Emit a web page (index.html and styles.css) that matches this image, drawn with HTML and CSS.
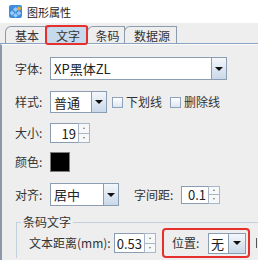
FILE: index.html
```html
<!DOCTYPE html>
<html>
<head>
    <meta charset="utf-8">
    <title>图形属性</title>
    <link rel="stylesheet" href="styles.css">
</head>
<body>
    <div class="titlebar">
        <svg class="appicon" width="13" height="13" viewBox="0 0 13 13">
            <rect x="0" y="0" width="13" height="13" rx="2" fill="#3b8de0"/>
            <path d="M6.5 2 L9 4.5 L6.5 7 L4 4.5 Z M3 5.5 L5.5 8 L3 10.5 L0.8 8.2 Z M6.5 8 L9 10.5 L6.5 12.5 L4 10.5 Z M10 6 L12.2 8.2 L10 10.5 L7.5 8 Z" fill="#9ccbf6"/>
            <circle cx="10" cy="3.5" r="2" fill="#f2a23a"/>
            <circle cx="10.6" cy="3" r="0.9" fill="#8fd14f"/>
        </svg>
        <span class="title">图形属性</span>
    </div>

    <div class="tabs">
        <div class="tab t-basic">基本</div>
        <div class="tab t-text active">文字</div>
        <div class="tab t-code">条码</div>
        <div class="tab t-data">数据源</div>
    </div>

    <div class="panel">
        <div class="row r-font">
            <span class="label">字体:</span>
            <div class="combo">
                <span class="field f-font">XP黑体ZL</span>
                <span class="drop"><i class="tri"></i></span>
            </div>
        </div>

        <div class="row r-style">
            <span class="label">样式:</span>
            <div class="combo">
                <span class="field f-style">普通</span>
                <span class="drop"><i class="tri"></i></span>
            </div>
            <span class="check c-under"></span><span class="ctext">下划线</span>
            <span class="check c-strike"></span><span class="ctext">删除线</span>
        </div>

        <div class="row r-size">
            <span class="label">大小:</span>
            <div class="spinner">
                <span class="field f-size">19</span>
                <span class="steps"><b class="up"></b><b class="down"></b></span>
            </div>
        </div>

        <div class="row r-color">
            <span class="label">颜色:</span>
            <span class="swatch"></span>
        </div>

        <div class="row r-align">
            <span class="label">对齐:</span>
            <div class="combo">
                <span class="field f-align">居中</span>
                <span class="drop"><i class="tri"></i></span>
            </div>
            <span class="label l-spacing">字间距:</span>
            <div class="spinner sp-small">
                <span class="field f-spacing">0.1</span>
                <span class="steps"><b class="up"></b><b class="down"></b></span>
            </div>
        </div>

        <fieldset class="group">
            <legend>条码文字</legend>
            <div class="row r-dist">
                <span class="label l-dist">文本距离(mm):</span>
                <div class="spinner">
                    <span class="field f-dist">0.53</span>
                    <span class="steps"><b class="up"></b><b class="down"></b></span>
                </div>
                <div class="mark">
                    <span class="label l-pos">位置:</span>
                    <div class="combo">
                        <span class="field f-pos">无</span>
                        <span class="drop d-pos"><i class="tri"></i></span>
                    </div>
                </div>
                <span class="cut"></span>
            </div>
        </fieldset>
    </div>
</body>
</html>
```

FILE: styles.css
```css
html, body {
    margin: 0;
    padding: 0;
}
body {
    width: 258px;
    height: 260px;
    overflow: hidden;
    background: #eeeeee;
    font: 12px "Noto Sans CJK SC", "Liberation Sans", sans-serif;
    color: #333333;
}

/* window title */
.titlebar {
    height: 23px;
    background: #ffffff;
    display: flex;
    align-items: center;
}
.appicon {
    margin-left: 9px;
    margin-top: -1px;
}
.title {
    margin-left: 5px;
    font-size: 11px;
    color: #1a1a1a;
    line-height: 12px;
}

/* tab strip */
.tabs {
    height: 20px;
    display: flex;
    align-items: flex-end;
    padding-left: 5px;
    border-bottom: 1px solid #8aa3c2;
}
.tab {
    box-sizing: border-box;
    height: 18px;
    margin-bottom: -1px;
    border: 1px solid #8d9cac;
    border-bottom: none;
    border-top-left-radius: 6px;
    margin-right: -1px;
    text-align: center;
    line-height: 17px;
    padding-left: 3px;
    color: #333;
    background: #eeeeee;
    border-bottom: 1px solid #8aa3c2;
}
.t-basic { width: 41px; }
.t-text { width: 43px; }
.t-code { width: 38px; }
.t-data { width: 53px; }
.tab.active {
    position: relative;
    background: #c6daee;
    border-bottom-color: #c6daee;
}
.tab.active::after {
    content: "";
    position: absolute;
    left: -1px;
    top: -2px;
    right: -1px;
    bottom: -2px;
    border: 2px solid #e5302d;
    border-radius: 3px;
}

/* content */
.panel {
    border-left: 2px solid #8c98a5;
    padding-left: 13px;
    height: 216px;
    border-top: 1px solid #fbfbfb;
}
.row {
    display: flex;
    align-items: center;
}
.label {
    width: 35px;
    flex: none;
    line-height: 14px;
    white-space: nowrap;
}
.r-font { margin-top: 12px; height: 23px; }
.r-style { margin-top: 11px; height: 22px; }
.r-size { margin-top: 10px; height: 20px; }
.r-color { margin-top: 9px; height: 20px; }
.r-align { margin-top: 11px; height: 23px; }

/* combo boxes */
.combo {
    display: flex;
    height: 100%;
}
.field {
    box-sizing: border-box;
    height: 100%;
    background: #ffffff;
    border: 1px solid #8b9db3;
    display: flex;
    align-items: center;
    padding-left: 3px;
    color: #222;
    white-space: nowrap;
}
.f-font { width: 162px; font-size: 13px; }
.f-style { width: 42px; font-size: 13px; }
.f-align { width: 54px; font-size: 13px; }
.f-pos { width: 21px; font-size: 13px; padding-left: 2px; }
.drop {
    box-sizing: border-box;
    width: 16px;
    height: 100%;
    margin-left: -1px;
    border: 1px solid #8b9db3;
    background: linear-gradient(#f4f7fb, #c9d8e8);
    display: flex;
    align-items: center;
    justify-content: center;
}
.d-pos { width: 18px; }
.tri {
    width: 0;
    height: 0;
    border-left: 4px solid transparent;
    border-right: 4px solid transparent;
    border-top: 4px solid #111;
}

/* check boxes */
.check {
    box-sizing: border-box;
    width: 11px;
    height: 11px;
    border: 1px solid #8ea2bb;
    background: linear-gradient(#ffffff, #dce5ef);
    flex: none;
}
.c-under { margin-left: 5px; }
.c-strike { margin-left: 8px; }
.ctext {
    margin-left: 3px;
    line-height: 14px;
}

/* spinners */
.spinner {
    display: flex;
    height: 100%;
}
.field.f-size,
.field.f-spacing,
.field.f-dist {
    justify-content: flex-end;
    padding-left: 0;
    padding-right: 2px;
    font-size: 13px;
}
.f-size { width: 29px; }
.f-dist { width: 31px; }
.f-spacing { width: 28px; }
.steps {
    width: 12px;
    height: 100%;
    margin-left: -1px;
    display: flex;
    flex-direction: column;
}
.steps b {
    flex: 1;
    border: 1px solid #a9b6c5;
    background: #f6f8fa;
    display: flex;
    align-items: center;
    justify-content: center;
}
.steps b.down {
    border-top: none;
}
.steps b::before {
    content: "";
    width: 0;
    height: 0;
    border-left: 1.5px solid transparent;
    border-right: 1.5px solid transparent;
}
.steps b.up::before { border-bottom: 2px solid #777; }
.steps b.down::before { border-top: 2px solid #777; }

.sp-small {
    height: 18px;
}
.l-spacing {
    width: 47px;
    margin-left: 15px;
}

.swatch {
    box-sizing: border-box;
    width: 20px;
    height: 20px;
    background: #000000;
    border: 1px solid #7d7d7d;
}

/* barcode text group */
.group {
    margin: 10px 0 0 1px;
    padding: 0 0 0 4px;
    border: 1px solid #c3d0de;
    border-right: none;
    border-bottom: none;
    min-width: 0;
}
.group legend {
    padding: 0 2px;
    line-height: 12px;
    font-size: 12px;
}
.r-dist {
    height: 30px;
    margin-left: 8px;
}
.l-dist {
    width: 85px;
}
.r-dist .spinner {
    height: 20px;
}
.mark {
    flex: none;
    box-sizing: border-box;
    height: 30px;
    margin-left: 6px;
    padding: 2px 2px 2px 8px;
    border: 2px solid #e5302d;
    border-radius: 4px;
    display: flex;
    align-items: center;
}
.l-pos {
    width: 36px;
}
.mark .combo {
    height: 21px;
}
.cut {
    flex: none;
    width: 1px;
    height: 10px;
    margin-left: 6px;
    background: #555;
}
```
